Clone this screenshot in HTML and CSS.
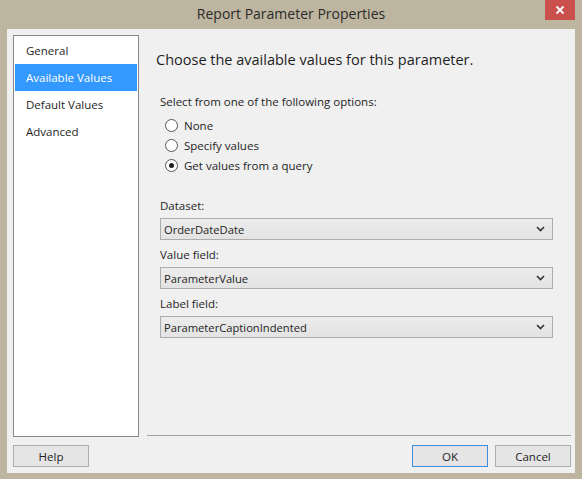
FILE: index.html
```html
<!DOCTYPE html>
<html>
<head>
<meta charset="utf-8">
<link rel="stylesheet" href="styles.css">
</head>
<body>
<div class="window">
  <div class="titlebar">
    <div class="title">Report Parameter Properties</div>
    <div class="close">
      <svg width="10" height="10" viewBox="0 0 10 10"><path d="M1.5 1.5 L8.5 8.5 M8.5 1.5 L1.5 8.5" stroke="#fff" stroke-width="1.8" fill="none"/></svg>
    </div>
  </div>
  <div class="client">
    <ul class="nav">
      <li class="nav-item">General</li>
      <li class="nav-item selected">Available Values</li>
      <li class="nav-item">Default Values</li>
      <li class="nav-item">Advanced</li>
    </ul>
    <div class="main">
      <h1 class="heading">Choose the available values for this parameter.</h1>
      <div class="form">
        <div class="options-label">Select from one of the following options:</div>
        <div class="radio-row"><span class="radio"></span>None</div>
        <div class="radio-row"><span class="radio"></span>Specify values</div>
        <div class="radio-row"><span class="radio checked"></span>Get values from a query</div>

        <div class="field-label first">Dataset:</div>
        <div class="select"><span>OrderDateDate</span><svg class="chev" width="9" height="6" viewBox="0 0 9 6"><path d="M1 1 L4.5 4.5 L8 1" stroke="#333" stroke-width="1.6" fill="none"/></svg></div>
        <div class="field-label">Value field:</div>
        <div class="select"><span>ParameterValue</span><svg class="chev" width="9" height="6" viewBox="0 0 9 6"><path d="M1 1 L4.5 4.5 L8 1" stroke="#333" stroke-width="1.6" fill="none"/></svg></div>
        <div class="field-label">Label field:</div>
        <div class="select"><span>ParameterCaptionIndented</span><svg class="chev" width="9" height="6" viewBox="0 0 9 6"><path d="M1 1 L4.5 4.5 L8 1" stroke="#333" stroke-width="1.6" fill="none"/></svg></div>
      </div>
    </div>
    <div class="footer">
      <button class="btn">Help</button>
      <div class="spacer"></div>
      <button class="btn default">OK</button>
      <button class="btn">Cancel</button>
    </div>
  </div>
</div>
</body>
</html>
```

FILE: styles.css
```css
html, body {
  margin: 0;
  padding: 0;
}
body {
  background: #bdb59f;
  font-family: "Open Sans", "Noto Sans", sans-serif;
  font-size: 11.5px;
  color: #1e1e1e;
  width: 582px;
  height: 479px;
  overflow: hidden;
}
.window {
  display: flex;
  flex-direction: column;
  height: 479px;
}
.titlebar {
  height: 29px;
  display: grid;
  grid-template-columns: 1fr auto;
  align-items: start;
}
.title {
  grid-column: 1 / 3;
  grid-row: 1;
  text-align: center;
  font-size: 14px;
  line-height: 18px;
  padding-top: 5px;
  color: #2b2b2b;
}
.close {
  grid-column: 2;
  grid-row: 1;
  width: 30px;
  height: 20px;
  margin-right: 7px;
  background: #c9504b;
  display: flex;
  align-items: center;
  justify-content: center;
}
.client {
  margin: 0 7px 6px 7px;
  height: 444px;
  box-sizing: border-box;
  background: #f0f0f0;
  padding: 6px 4px 0 6px;
  display: grid;
  grid-template-columns: 126px 1fr;
  grid-template-rows: 402px 22px;
  column-gap: 7px;
  row-gap: 8px;
}
.nav {
  margin: 0;
  padding: 1px;
  list-style: none;
  background: #fff;
  border: 1px solid #828790;
  box-sizing: border-box;
}
.nav-item {
  height: 27px;
  line-height: 27px;
  padding-left: 11px;
  color: #1e1e1e;
}
.nav-item.selected {
  background: #3399ff;
  color: #fff;
}
.main {
  border-bottom: 1px solid #a0a0a0;
  margin-bottom: 1px;
  margin-left: 1px;
}
.heading {
  margin: 0;
  padding: 15px 0 0 9px;
  font-size: 14.5px;
  line-height: 20px;
  font-weight: normal;
  color: #1e1e1e;
}
.form {
  padding: 24px 18px 0 13px;
}
.options-label {
  line-height: 16px;
  margin-bottom: 5px;
}
.radio-row {
  display: flex;
  align-items: center;
  height: 20px;
  padding-left: 5px;
  gap: 6px;
}
.radio {
  width: 11px;
  height: 11px;
  border: 1px solid #555;
  border-radius: 50%;
  background: #fff;
  position: relative;
  box-sizing: content-box;
}
.radio.checked::after {
  content: "";
  position: absolute;
  left: 3px;
  top: 3px;
  width: 5px;
  height: 5px;
  border-radius: 50%;
  background: #1e1e1e;
}
.field-label {
  height: 16px;
  line-height: 16px;
  margin: 7px 0 4px;
}
.field-label.first {
  margin-top: 23px;
}
.select {
  height: 22px;
  box-sizing: border-box;
  border: 1px solid #acacac;
  background: linear-gradient(#ececec, #e3e3e3);
  display: flex;
  align-items: center;
  justify-content: space-between;
  padding: 0 7px 0 3px;
  font-size: 11.2px;
}
.footer {
  grid-column: 1 / 3;
  display: flex;
  gap: 7px;
}
.spacer {
  flex: 1;
}
.btn {
  width: 76px;
  height: 22px;
  margin: 0;
  padding: 0;
  font-family: inherit;
  font-size: 11.5px;
  color: #1e1e1e;
  border: 1px solid #adadad;
  background: #e5e5e5;
}
.btn.default {
  border-color: #3c8ddb;
}
```
